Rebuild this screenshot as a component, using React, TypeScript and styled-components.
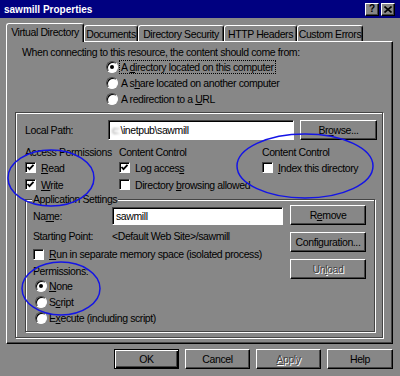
import React from "react";
import styled, { createGlobalStyle } from "styled-components";

const FACE = "#878787";
const HI = "#ffffff";
const SH = "#444444";
const DK = "#000000";

const GlobalStyle = createGlobalStyle`
  html, body { margin: 0; padding: 0; background: ${FACE}; }
  body {
    font-family: "Liberation Sans", Arial, sans-serif;
    font-size: 10.5px;
    letter-spacing: -0.4px;
    color: #000;
  }
  * { box-sizing: border-box; }
`;

const Window = styled.div`
  position: relative;
  width: 400px;
  height: 376px;
  background: ${FACE};
  overflow: hidden;
  display: flex;
  flex-direction: column;
`;

const TitleBar = styled.div`
  height: 18px;
  flex: none;
  background: #000080;
  color: #fff;
  display: flex;
  align-items: center;
  justify-content: space-between;
  padding: 0 5px 0 4px;
  font-weight: bold;
  font-size: 10px;
  letter-spacing: 0;
`;

const TitleButtons = styled.div`
  display: flex;
  gap: 2px;
`;

const TitleButton = styled.div`
  width: 14px;
  height: 13px;
  background: ${FACE};
  border: 1px solid;
  border-color: ${HI} ${DK} ${DK} ${HI};
  box-shadow: inset -1px -1px ${SH};
  color: #000;
  display: flex;
  align-items: center;
  justify-content: center;
  font-size: 10px;
  font-weight: bold;
  line-height: 1;
`;

const Body = styled.div`
  flex: 1;
  display: flex;
  flex-direction: column;
  padding: 5px 7px 0 6px;
`;

const TabStrip = styled.div`
  display: flex;
  align-items: flex-end;
  height: 19px;
  position: relative;
  z-index: 1;
  margin-bottom: -1px;
`;

const Tab = styled.div<{ $w: number; $active?: boolean }>`
  width: ${(p) => p.$w}px;
  height: ${(p) => (p.$active ? 19 : 16)}px;
  margin-bottom: ${(p) => (p.$active ? 0 : 1)}px;
  background: ${FACE};
  border: 1px solid;
  border-color: ${HI} ${DK} transparent ${HI};
  border-bottom: none;
  border-radius: 3px 3px 0 0;
  box-shadow: inset -1px 0 ${SH};
  display: flex;
  align-items: center;
  justify-content: center;
  padding-bottom: ${(p) => (p.$active ? 2 : 0)}px;
  padding-top: ${(p) => (p.$active ? 0 : 1)}px;
  white-space: nowrap;
`;

const Panel = styled.div`
  height: 303px;
  border: 1px solid;
  border-color: ${HI} ${DK} ${DK} ${HI};
  box-shadow: inset -1px -1px ${SH};
  display: flex;
  flex-direction: column;
  padding: 3px 8px 0 8px;
`;

const Intro = styled.div`
  height: 14px;
  line-height: 14px;
  margin-left: 7px;
`;

const SourceList = styled.div`
  margin-left: 91px;
  display: flex;
  flex-direction: column;
`;

const OptionRow = styled.div<{ $h?: number; $indent?: number; $gap?: number }>`
  height: ${(p) => p.$h ?? 16}px;
  display: flex;
  align-items: center;
  gap: ${(p) => p.$gap ?? 3}px;
  padding-left: ${(p) => p.$indent ?? 0}px;
  white-space: nowrap;
`;

const Radio = styled.span<{ $on?: boolean }>`
  width: 12px;
  height: 12px;
  flex: none;
  border-radius: 50%;
  background: #fff;
  border: 1px solid;
  border-color: ${SH} ${HI} ${HI} ${SH};
  box-shadow: inset 1px 1px ${DK};
  display: flex;
  align-items: center;
  justify-content: center;
  &::after {
    content: "";
    width: 4px;
    height: 4px;
    border-radius: 50%;
    background: ${(p) => (p.$on ? "#000" : "transparent")};
  }
`;

const CheckBox = styled.span`
  width: 11px;
  height: 11px;
  flex: none;
  background: #fff;
  border: 1px solid;
  border-color: ${SH} ${HI} ${HI} ${SH};
  box-shadow: inset 1px 1px ${DK};
  display: flex;
  align-items: center;
  justify-content: center;
`;

const FocusLabel = styled.span`
  border: 1px dotted #000;
  padding: 0 1px;
  line-height: 12px;
`;

const Group = styled.div<{ $h: number; $ml: number; $mr: number; $mt?: number }>`
  position: relative;
  height: ${(p) => p.$h}px;
  margin: ${(p) => p.$mt ?? 0}px ${(p) => p.$mr}px 0 ${(p) => p.$ml}px;
  border: 1px solid ${SH};
  box-shadow: inset 1px 1px ${HI}, 1px 1px ${HI};
  display: flex;
  flex-direction: column;
`;

const Legend = styled.span`
  position: absolute;
  top: -7px;
  left: 6px;
  padding: 0 1px;
  line-height: 12px;
  background: ${FACE};
`;

const PathRow = styled.div`
  display: flex;
  align-items: center;
  height: 20px;
  margin-top: 7px;
  padding-left: 9px;
`;

const Label = styled.span<{ $w: number }>`
  width: ${(p) => p.$w}px;
  flex: none;
  white-space: nowrap;
`;

const TextBox = styled.div<{ $w: number; $h: number }>`
  width: ${(p) => p.$w}px;
  height: ${(p) => p.$h}px;
  flex: none;
  background: #fff;
  border: 1px solid;
  border-color: ${SH} ${HI} ${HI} ${SH};
  box-shadow: inset 1px 1px ${DK};
  display: flex;
  align-items: center;
  padding-left: 3px;
  white-space: nowrap;
`;

const Blurred = styled.span`
  color: #8a8a8a;
  filter: blur(1.3px);
  margin-right: 1px;
`;

const Button = styled.div<{ $w: number; $h?: number; $ml?: number; $default?: boolean; $disabled?: boolean }>`
  width: ${(p) => p.$w}px;
  height: ${(p) => p.$h ?? 20}px;
  flex: none;
  margin-left: ${(p) => p.$ml ?? 0}px;
  background: ${FACE};
  border: 1px solid;
  border-color: ${(p) => (p.$default ? `${DK}` : `${HI} ${DK} ${DK} ${HI}`)};
  box-shadow: ${(p) =>
    p.$default
      ? `inset 1px 1px ${HI}, inset -1px -1px ${DK}, inset -2px -2px ${SH}`
      : `inset -1px -1px ${SH}`};
  color: ${(p) => (p.$disabled ? SH : "#000")};
  text-shadow: ${(p) => (p.$disabled ? `1px 1px 0 ${HI}` : "none")};
  display: flex;
  align-items: center;
  justify-content: center;
  white-space: nowrap;
`;

const PermGrid = styled.div`
  display: grid;
  grid-template-columns: 94px 143px 1fr;
  grid-auto-rows: 17px;
  grid-template-rows: 15px;
  margin-top: 4px;
  padding-left: 9px;
  align-items: center;
`;

const Cell = styled.div<{ $gap?: number }>`
  display: flex;
  align-items: center;
  gap: ${(p) => p.$gap ?? 5}px;
  white-space: nowrap;
`;

const AppInner = styled.div`
  display: flex;
  flex: 1;
`;

const LeftCol = styled.div`
  flex: 1;
  display: flex;
  flex-direction: column;
  padding: 7px 0 0 7px;
`;

const RightCol = styled.div`
  display: flex;
  flex-direction: column;
  gap: 7px;
  padding-top: 5px;
  margin-right: 8px;
`;

const FieldRow = styled.div<{ $h: number; $mt?: number }>`
  display: flex;
  align-items: center;
  height: ${(p) => p.$h}px;
  margin-top: ${(p) => p.$mt ?? 0}px;
  white-space: nowrap;
`;

const ButtonBar = styled.div`
  display: flex;
  justify-content: flex-end;
  gap: 6px;
  margin-top: 5px;
`;

const Overlay = styled.svg`
  position: absolute;
  left: 0;
  top: 0;
  pointer-events: none;
`;

const Check = () => (
  <svg width="9" height="9" viewBox="0 0 9 9">
    <polyline points="1.5,4 3.5,6.2 7.5,1.8" fill="none" stroke="#000" strokeWidth="1.8" />
  </svg>
);

const CloseGlyph = () => (
  <svg width="8" height="7" viewBox="0 0 8 7">
    <path d="M0.5 0.5 L7.5 6.5 M7.5 0.5 L0.5 6.5" stroke="#000" strokeWidth="1.6" />
  </svg>
);

export default function App() {
  return (
    <>
      <GlobalStyle />
      <Window>
        <TitleBar>
          <span>sawmill Properties</span>
          <TitleButtons>
            <TitleButton>?</TitleButton>
            <TitleButton>
              <CloseGlyph />
            </TitleButton>
          </TitleButtons>
        </TitleBar>
        <Body>
          <TabStrip>
            <Tab $w={78} $active>Virtual Directory</Tab>
            <Tab $w={54}>Documents</Tab>
            <Tab $w={86}>Directory Security</Tab>
            <Tab $w={73}>HTTP Headers</Tab>
            <Tab $w={66}>Custom Errors</Tab>
          </TabStrip>
          <Panel>
            <Intro>When connecting to this resource, the content should come from:</Intro>
            <SourceList>
              <OptionRow $gap={1}>
                <Radio $on />
                <FocusLabel>
                  A <u>d</u>irectory located on this computer
                </FocusLabel>
              </OptionRow>
              <OptionRow>
                <Radio />
                <span>
                  A s<u>h</u>are located on another computer
                </span>
              </OptionRow>
              <OptionRow>
                <Radio />
                <span>
                  A redirection to a <u>U</u>RL
                </span>
              </OptionRow>
            </SourceList>
            <Group $h={226} $ml={0} $mr={1} $mt={5}>
              <PathRow>
                <Label $w={83}>Local Path:</Label>
                <TextBox $w={186} $h={20}>
                  <Blurred>c:</Blurred>\inetpub\sawmill
                </TextBox>
                <Button $w={77} $ml={6}>
                  Br<u>o</u>wse...
                </Button>
              </PathRow>
              <PermGrid>
                <Cell>Access Permissions</Cell>
                <Cell>Content Control</Cell>
                <Cell>Content Control</Cell>
                <Cell>
                  <CheckBox>
                    <Check />
                  </CheckBox>
                  <span>
                    <u>R</u>ead
                  </span>
                </Cell>
                <Cell>
                  <CheckBox>
                    <Check />
                  </CheckBox>
                  <span>
                    Log acces<u>s</u>
                  </span>
                </Cell>
                <Cell>
                  <CheckBox />
                  <span>
                    <u>I</u>ndex this directory
                  </span>
                </Cell>
                <Cell>
                  <CheckBox>
                    <Check />
                  </CheckBox>
                  <span>
                    <u>W</u>rite
                  </span>
                </Cell>
                <Cell>
                  <CheckBox />
                  <span>
                    Directory <u>b</u>rowsing allowed
                  </span>
                </Cell>
                <Cell />
              </PermGrid>
              <Group $h={133} $ml={9} $mr={7} $mt={6}>
                <Legend>Application Settings</Legend>
                <AppInner>
                  <LeftCol>
                    <FieldRow $h={18}>
                      <Label $w={79}>
                        Na<u>m</u>e:
                      </Label>
                      <TextBox $w={171} $h={18}>
                        sawmill
                      </TextBox>
                    </FieldRow>
                    <FieldRow $h={18} $mt={2}>
                      <Label $w={79}>Starting Point:</Label>
                      <span>&lt;Default Web Site&gt;/sawmill</span>
                    </FieldRow>
                    <OptionRow $h={18} $gap={5}>
                      <CheckBox />
                      <span>
                        <u>R</u>un in separate memory space (isolated process)
                      </span>
                    </OptionRow>
                    <FieldRow $h={15}>Permissions:</FieldRow>
                    <OptionRow $indent={2} $gap={2}>
                      <Radio $on />
                      <span>
                        <u>N</u>one
                      </span>
                    </OptionRow>
                    <OptionRow $indent={2} $gap={2}>
                      <Radio />
                      <span>
                        S<u>c</u>ript
                      </span>
                    </OptionRow>
                    <OptionRow $indent={2} $gap={2}>
                      <Radio />
                      <span>
                        E<u>x</u>ecute (including script)
                      </span>
                    </OptionRow>
                  </LeftCol>
                  <RightCol>
                    <Button $w={76}>
                      R<u>e</u>move
                    </Button>
                    <Button $w={76}>
                      Confi<u>g</u>uration...
                    </Button>
                    <Button $w={76} $disabled>
                      Un<u>l</u>oad
                    </Button>
                  </RightCol>
                </AppInner>
              </Group>
            </Group>
          </Panel>
          <ButtonBar>
            <Button $w={65} $default>
              OK
            </Button>
            <Button $w={65}>Cancel</Button>
            <Button $w={65} $disabled>
              <u>A</u>pply
            </Button>
            <Button $w={66}>Help</Button>
          </ButtonBar>
        </Body>
        <Overlay width="400" height="376" viewBox="0 0 400 376">
          <ellipse cx="51" cy="178" rx="43" ry="28" fill="none" stroke="#1414e6" strokeWidth="1.5" />
          <ellipse cx="305" cy="166" rx="68" ry="32" fill="none" stroke="#1414e6" strokeWidth="1.5" />
          <ellipse cx="61" cy="288.5" rx="39" ry="26.5" fill="none" stroke="#1414e6" strokeWidth="1.5" />
        </Overlay>
      </Window>
    </>
  );
}
